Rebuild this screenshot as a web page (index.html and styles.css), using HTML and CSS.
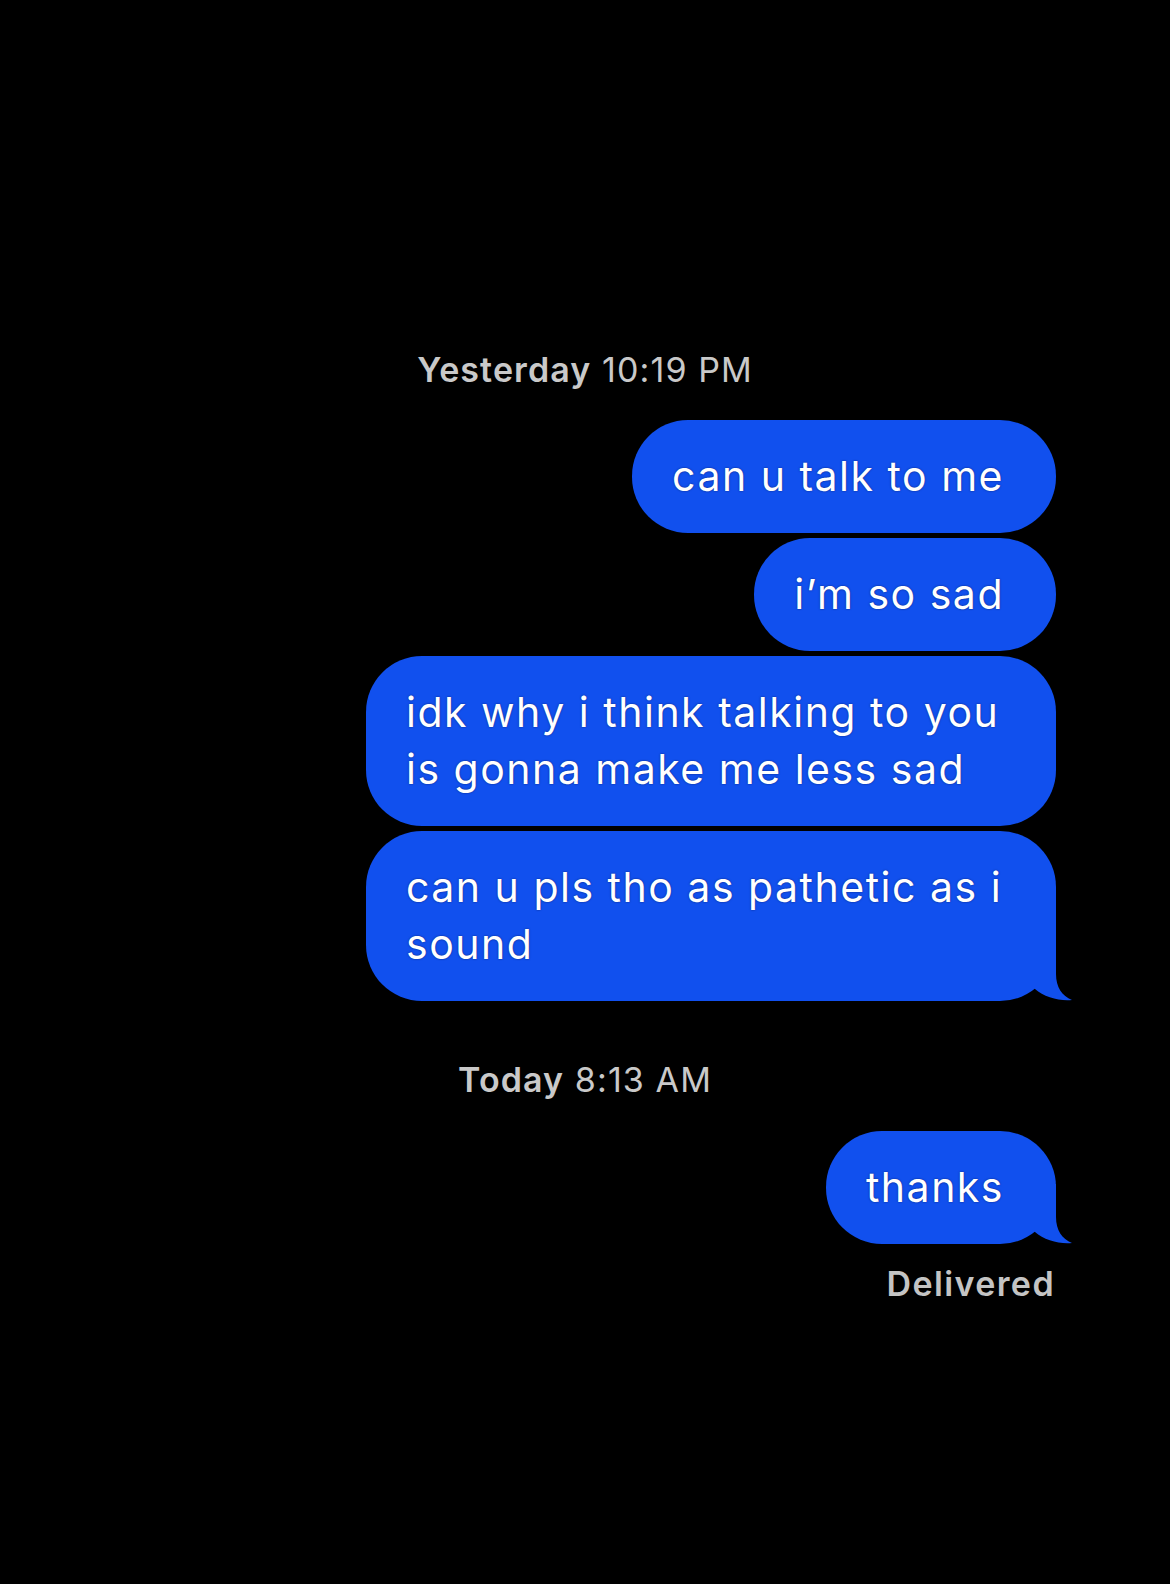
FILE: index.html
```html
<!DOCTYPE html>
<html>
<head>
  <meta charset="UTF-8">
  <title>Messages</title>
  <link rel="stylesheet" href="styles.css">
</head>
<body>

  <main class="thread">
    <div class="stamp"><b>Yesterday</b> 10:19 PM</div>

    <div class="group">
      <div class="bubble">can u talk to me</div>
      <div class="bubble">i’m so sad</div>
      <div class="bubble">idk why i think talking to you is gonna make me less sad</div>
      <div class="bubble tail">
        can u pls tho as pathetic as i sound
        <svg class="tail-shape" viewBox="0 0 40 60" width="40" height="60"><path d="M0 0 H24 V33 C24 46 30 55 40 59 C28 60.5 12 56 3 48 L0 45 Z"/></svg>
      </div>
    </div>

    <div class="stamp stamp-today"><b>Today</b> 8:13 AM</div>

    <div class="group">
      <div class="bubble tail">
        thanks
        <svg class="tail-shape" viewBox="0 0 40 60" width="40" height="60"><path d="M0 0 H24 V33 C24 46 30 55 40 59 C28 60.5 12 56 3 48 L0 45 Z"/></svg>
      </div>
    </div>

    <div class="status">Delivered</div>
  </main>

</body>
</html>
```

FILE: styles.css
```css
body {
  margin: 0;
  background: #000;
  font-family: Inter, "Noto Sans", sans-serif;
  color: #fff;
}

.thread {
  display: flex;
  flex-direction: column;
  padding: 350px 114px 0 0;
  min-height: 1234px;
}

.stamp {
  align-self: center;
  margin-left: 114px;
  font-size: 34px;
  line-height: 40px;
  letter-spacing: 1.1px;
  color: #c9c9c9;
  margin-bottom: 30px;
}

.stamp b {
  font-weight: 600;
}

.stamp-today {
  margin-top: 59px;
  margin-bottom: 31px;
}

.group {
  display: flex;
  flex-direction: column;
  align-items: flex-end;
  gap: 5px;
}

.bubble {
  position: relative;
  box-sizing: border-box;
  max-width: 690px;
  padding: 28px 52px 28px 40px;
  background: #1150ee;
  border-radius: 56px;
  font-size: 41px;
  line-height: 57px;
  letter-spacing: 1.5px;
  text-shadow: 0 0 2px rgba(0, 0, 40, 0.6);
}

.tail-shape {
  position: absolute;
  right: -16px;
  bottom: 0;
  fill: #1150ee;
}

.status {
  align-self: flex-end;
  margin-top: 20px;
  padding-right: 1px;
  font-size: 34px;
  line-height: 40px;
  letter-spacing: 1.4px;
  font-weight: 600;
  color: #c4c4c4;
}
```
